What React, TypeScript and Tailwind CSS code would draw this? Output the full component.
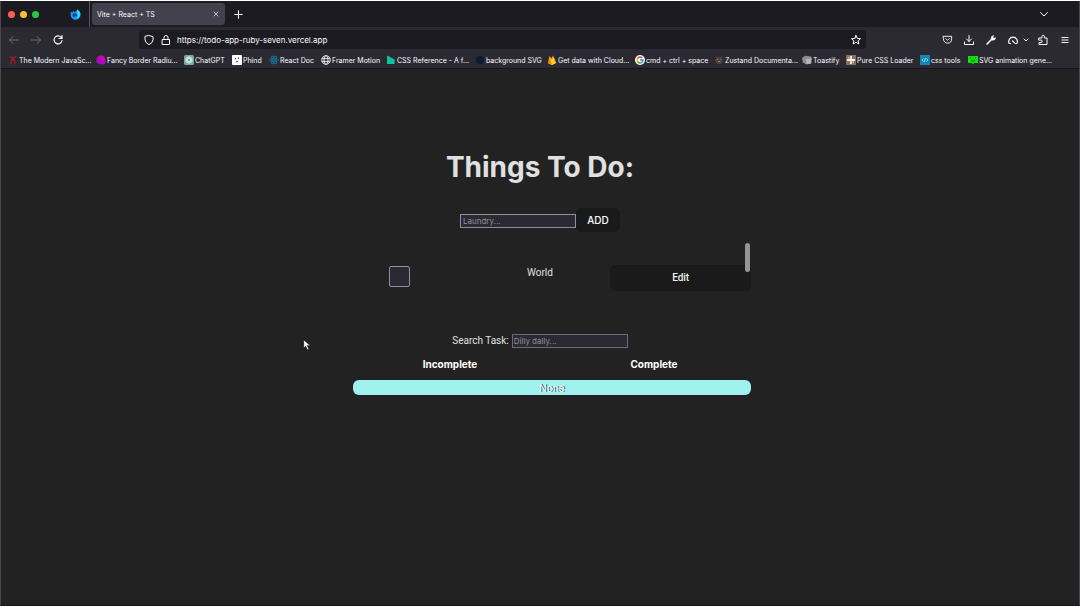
import React from "react";

type Bookmark = { label: string; width: string; icon: React.ReactNode };

const bookmarks: Bookmark[] = [
  { label: "The Modern JavaSc...", width: "w-[88px]", icon: <path d="M2 .8l1.200 1.700h3.600L8 .8M5 2v3M3 4.500l2-1 2 1M3 9.500l.5-3.500L5 5l1.500 1L7 9.500" fill="none" stroke="#a01c2c" strokeWidth="1.200" /> },
  { label: "Fancy Border Radiu...", width: "w-[88px]", icon: (<><defs><linearGradient id="blob" x1="0" y1="1" x2="1" y2="0"><stop offset="0" stopColor="#7a10d8" /><stop offset="1" stopColor="#f0029a" /></linearGradient></defs><path d="M4 .5C7 0 9.500 2 9.500 5.500S8 10 5.500 9.500 0 8.500.2 5.800 2 .8 4 .5z" fill="url(#blob)" /></>) },
  { label: "ChatGPT", width: "w-[48px]", icon: (<><rect width="10" height="10" rx="1.500" fill="#74aa9c" /><g fill="none" stroke="#e8f5f1" strokeWidth=".7"><ellipse cx="5" cy="5" rx="1.800" ry="3.500" /><ellipse cx="5" cy="5" rx="1.800" ry="3.500" transform="rotate(60 5 5)" /><ellipse cx="5" cy="5" rx="1.800" ry="3.500" transform="rotate(120 5 5)" /></g></>) },
  { label: "Phind", width: "w-[37px]", icon: (<><rect width="10" height="10" rx=".8" fill="#fff" /><path d="M3 3h1v1.200H3zM6 2.500h1v1.200H6zM4 6h2v.8H4z" fill="#222" /></>) },
  { label: "React Doc", width: "w-[52px]", icon: (<g fill="none" stroke="#14789c" strokeWidth=".8"><ellipse cx="5" cy="5" rx="4.500" ry="1.800" /><ellipse cx="5" cy="5" rx="4.500" ry="1.800" transform="rotate(60 5 5)" /><ellipse cx="5" cy="5" rx="4.500" ry="1.800" transform="rotate(120 5 5)" /><circle cx="5" cy="5" r=".6" fill="#14789c" /></g>) },
  { label: "Framer Motion", width: "w-[65px]", icon: (<g fill="none" stroke="#f4f4f6" strokeWidth=".9"><circle cx="5" cy="5" r="4.300" /><ellipse cx="5" cy="5" rx="2" ry="4.300" /><path d="M1 3.600h8M1 6.400h8" /></g>) },
  { label: "CSS Reference - A f...", width: "w-[89px]", icon: <path d="M1 1.200Q1 .5 1.800 .8L8.500 4.500Q9.300 5 8.500 5.600V9H1z" fill="#0fc49c" /> },
  { label: "background SVG", width: "w-[72px]", icon: <circle cx="5" cy="5" r="4" fill="#0b1c2e" /> },
  { label: "Get data with Cloud...", width: "w-[88px]", icon: (<><path d="M1 8L2.500 1l2 2.500L6 .5 9 8 5 10z" fill="#ffa611" /><path d="M1 8l6-5.500L9 8 5 10z" fill="#ffcb2b" /><path d="M1 8l2-3 2 4.800z" fill="#f57c00" /></>) },
  { label: "cmd + ctrl + space", width: "w-[79px]", icon: (<><circle cx="5" cy="5" r="5" fill="#fff" /><g fill="none" strokeWidth="1.500"><path d="M7.200 2.900A3 3 0 0 0 2.400 3.600" stroke="#ea4335" /><path d="M2.400 3.600a3 3 0 0 0 0 2.800" stroke="#fbbc05" /><path d="M2.400 6.400A3 3 0 0 0 7 7.200" stroke="#34a853" /><path d="M7 7.200A3 3 0 0 0 8 5H5" stroke="#4285f4" /></g></>) },
  { label: "Zustand Documenta...", width: "w-[88px]", icon: (<><path d="M2 3l-.5-2 2 1h3l2-1L8 4l1 2-2 3H3L1 6z" fill="#4b403c" /><path d="M3 4.500h1M6.500 4.500h1M4 6.500h2" stroke="#c8854e" strokeWidth=".8" /></>) },
  { label: "Toastify", width: "w-[44px]", icon: (<><path d="M0 3L3 .8l6 .7 1 2-.5 5-5 1L.8 7.500z" fill="#8d8d90" /><path d="M4 4l5-.5v5l-4.500.5z" fill="#b5b5b8" /></>) },
  { label: "Pure CSS Loader", width: "w-[74px]", icon: (<><rect width="10" height="10" fill="#8c6f5c" /><path d="M5 1v8M1 5h8" stroke="#f4eee4" strokeWidth="1.800" /><path d="M2 2h1.500v1.500H2zM6.500 6.500H8V8H6.500z" fill="#d4bda5" /></>) },
  { label: "css tools", width: "w-[48px]", icon: (<><rect width="10" height="10" fill="#1287b5" /><path d="M3.500 3.500L2 5l1.500 1.500M6.500 3.500L8 5 6.500 6.500M5.500 3l-1 4" stroke="#d7f1fb" strokeWidth=".7" fill="none" /></>) },
  { label: "SVG animation gene...", width: "w-[84px]", icon: (<><path d="M0 1h10v7H6l-1 1.500L4 8H0z" fill="#0ee014" /><path d="M2 3h1M7 3h1M3 5.500q2 1.500 4 0" stroke="#075c0a" strokeWidth=".8" fill="none" /></>) },
];

const iconButton = "flex shrink-0 items-center justify-center";

function Glyph({ size = "size-3", children }: { size?: string; children: React.ReactNode }) {
  return (
    <svg viewBox="0 0 12 12" className={`${size} shrink-0`} fill="none" stroke="currentColor" strokeWidth="1" strokeLinecap="round" strokeLinejoin="round" aria-hidden="true">
      {children}
    </svg>
  );
}

function TabBar() {
  return (
    <div className="flex h-[26px] items-center bg-[#1c1b22]">
      <div className="flex gap-[5px] pl-[7px]">
        <button aria-label="Close window" className="size-[7px] rounded-full bg-[#ff5f57]" />
        <button aria-label="Minimize window" className="size-[7px] rounded-full bg-[#febc2e]" />
        <button aria-label="Zoom window" className="size-[7px] rounded-full bg-[#28c840]" />
      </div>
      <button aria-label="Firefox View" className="ml-[31px]">
        <svg viewBox="0 0 12 12" className="block size-[11px]" aria-hidden="true">
          <path d="M1 3l1.500.8L3.500 2l1 1.500Q6 2.500 7 3L8 .5q3.500 2 3.500 5.500A5.400 5.400 0 0 1 .7 6.500Q.5 4.500 1 3z" fill="#139cf0" />
          <path d="M8 .5q4 3 3 6.500Q10 10 7 10.500 10 7 7 3z" fill="#3ad6fb" />
          <path d="M3 5l3-.5q2 .8 1.500 2.500T4.500 8.500 3 5z" fill="#1b3da7" />
        </svg>
      </button>
      <div className="ml-2 h-full w-px bg-[#55545d]" />
      <div className="ml-[2px] flex h-[22px] w-[133px] items-center justify-between rounded-[3px] bg-[#42414d] px-[5px]">
        <span className="text-[7px] text-[#fbfbfe]">Vite + React + TS</span>
        <button aria-label="Close tab" className={iconButton}>
          <Glyph size="size-[8px]"><path d="M3 3l6 6M9 3l-6 6" /></Glyph>
        </button>
      </div>
      <button aria-label="New tab" className={`${iconButton} ml-2`}>
        <Glyph size="size-[11px]"><path d="M6 2v8M2 6h8" strokeWidth="1.200" /></Glyph>
      </button>
      <button aria-label="List all tabs" className={`${iconButton} mr-[29px] ml-auto`}>
        <Glyph><path d="M2.500 4.500L6 8l3.500-3.500" /></Glyph>
      </button>
    </div>
  );
}

function NavBar() {
  return (
    <div className="flex h-[25px] items-center bg-[#2b2a33] pr-2 pl-[7px]">
      <div className="flex w-[131px] shrink-0 items-center gap-[10px]">
        <button aria-label="Back" className={`${iconButton} text-[#6c6b73]`}>
          <Glyph><path d="M10.500 6h-9M5 2.500L1.500 6 5 9.500" /></Glyph>
        </button>
        <button aria-label="Forward" className={`${iconButton} text-[#6c6b73]`}>
          <Glyph><path d="M1.500 6h9M7 2.500L10.500 6 7 9.500" /></Glyph>
        </button>
        <button aria-label="Reload" className={iconButton}>
          <Glyph><path d="M9.800 4.500A4 4 0 1 0 10 6.500M10 1.500v3H7" strokeWidth="1.200" /></Glyph>
        </button>
      </div>
      <div className="flex h-[19px] w-[727px] items-center rounded-[3px] bg-[#1c1b22] px-1">
        <Glyph><path d="M6 1.500l4 1.200v3q0 3-4 5-4-2-4-5v-3z" /></Glyph>
        <span className="ml-[5px] flex">
          <Glyph><path d="M2.500 5.500h7v5h-7zM4 5.500v-2a2 2 0 0 1 4 0v2" /></Glyph>
        </span>
        <input aria-label="Address" defaultValue="https://todo-app-ruby-seven.vercel.app" className="ml-[5px] min-w-0 flex-1 bg-transparent text-[8px] text-[#fbfbfe] outline-none" />
        <button aria-label="Bookmark this page" className={iconButton}>
          <Glyph><path d="M6 1.500l1.300 2.900 3.200.3-2.400 2.100.8 3.200L6 8.300 3.100 10l.8-3.200L1.500 4.700l3.200-.3z" /></Glyph>
        </button>
      </div>
      <div className="ml-auto flex items-center text-[#fbfbfe]">
        <button aria-label="Pocket" className={`${iconButton} mr-[10px]`}>
          <Glyph size="size-[11px]"><path d="M1.500 2.500h9v3a4.500 4.500 0 0 1-9 0zM4 5l2 2 2-2" /></Glyph>
        </button>
        <button aria-label="Downloads" className={`${iconButton} mr-[10px]`}>
          <Glyph><path d="M6 1.500v6M3.500 5L6 7.500 8.500 5M1.500 8v2.500h9V8" /></Glyph>
        </button>
        <button aria-label="Developer tools" className={`${iconButton} mr-[10px]`}>
          <Glyph><path d="M2 10l4.500-4.500" strokeWidth="1.600" /><path d="M6 4.500Q6 2 8.500 1.500L8 3.500 9 4.300l1.700-.5Q10.500 6.500 7.500 6.300z" fill="currentColor" strokeWidth=".5" /></Glyph>
        </button>
        <button aria-label="Extension" className={`${iconButton} mr-[4px]`}>
          <Glyph><path d="M3.500 9.500H2.300A4.300 4.300 0 1 1 9.800 9.500H8.500" strokeWidth="1.200" /><path d="M5.500 7l2 1.800" strokeWidth="1.200" /></Glyph>
        </button>
        <button aria-label="More" className={`${iconButton} mr-[8px]`}>
          <Glyph size="size-[6px]"><path d="M2 4l4 4 4-4" strokeWidth="2" /></Glyph>
        </button>
        <button aria-label="Extensions" className={`${iconButton} mr-[10px]`}>
          <Glyph><path d="M2 4h3V2.500a1.200 1.200 0 0 1 2.400 0V4H10v6.500H2V8.500h2a1.200 1.200 0 0 0 0-2.400H2z" /></Glyph>
        </button>
        <button aria-label="Menu" className={iconButton}>
          <Glyph><path d="M2.500 3.500h7M2.500 6h7M2.500 8.500h7" strokeLinecap="butt" /></Glyph>
        </button>
      </div>
    </div>
  );
}

function BookmarksBar() {
  return (
    <nav aria-label="Bookmarks" className="flex h-[17px] items-center overflow-hidden border-b border-[#17161b] bg-[#2b2a33] pl-[7px]">
      {bookmarks.map((b) => (
        <a key={b.label} href="#" className={`${b.width} flex shrink-0 items-center gap-px text-[7px] whitespace-nowrap text-[#fbfbfe]`}>
          <svg viewBox="0 0 10 10" className="size-[10px] shrink-0" aria-hidden="true">{b.icon}</svg>
          {b.label}
        </a>
      ))}
    </nav>
  );
}

export default function App() {
  return (
    <div className="flex min-h-screen flex-col bg-white pt-px pb-[2px] font-['Inter',sans-serif] leading-none text-[#fbfbfe]">
      <div className="flex flex-1 flex-col overflow-hidden border-x border-b border-[#48484b] border-b-[#171518] bg-[#222222]">
        <TabBar />
        <NavBar />
        <BookmarksBar />
        <main className="mx-auto flex w-full max-w-[422px] flex-col items-center pt-[78px] text-[10px] text-[#e0e0e0]">
          <h1 className="text-[28px] leading-[40px] font-bold whitespace-nowrap">Things To Do:</h1>
          <form className="mt-[21px] flex items-center" onSubmit={(e) => e.preventDefault()}>
            <input aria-label="New task" placeholder="Laundry..." className="mt-[2px] h-[14px] w-[116px] border border-[#8f8f9d] bg-[#2b2a33] px-[2px] text-[8px] placeholder:text-[#8f8f96]" />
            <button className="h-6 w-[44px] rounded-[5px] bg-[#1a1a1a] font-medium text-white">ADD</button>
          </form>
          <div className="relative mt-[11px] h-[56px] w-full font-['Roboto',sans-serif]">
            <div className="grid grid-cols-3 pt-[22px]">
              <input type="checkbox" aria-label="Complete World" className="mt-px size-[21px] appearance-none justify-self-center rounded-[2px] border border-[#8f8f9d] bg-[#2b2a33]" />
              <span className="pt-[3px] text-center">World</span>
              <button className="h-[26px] rounded-[5px] bg-[#1a1a1a] font-medium text-[#efefef]">Edit</button>
            </div>
            <div className="absolute top-0 right-px h-[29px] w-[5px] rounded-full bg-[#949494]" />
          </div>
          <div className="mt-[35px] flex items-center gap-[3px]">
            <label htmlFor="search" className="font-['Roboto',sans-serif]">Search Task:</label>
            <input id="search" placeholder="Dilly dally..." className="h-[14px] w-[116px] border border-[#6b6a76] bg-[#2b2a33] px-px text-[8px] placeholder:text-[#8f8f96]" />
          </div>
          <div className="mt-[11px] w-full pl-6">
            <div className="grid grid-cols-2 gap-[10px] text-center font-bold text-white">
              <h2>Incomplete</h2>
              <h2>Complete</h2>
            </div>
            <div className="mt-[11px] flex h-[15px] items-center justify-center rounded-[6px] bg-[#a0f2ee]">
              <span className="text-white [text-shadow:1px_0_0_#213547]">None</span>
            </div>
          </div>
        </main>
      </div>
      <svg viewBox="0 0 12 18" className="pointer-events-none fixed top-[339px] left-[303px] h-[12px] w-[8px]" aria-hidden="true">
        <path d="M1 1v13l3-3 2.500 5.500 2.500-1L6.500 10H11z" fill="#fff" stroke="#111" strokeWidth="1" />
      </svg>
    </div>
  );
}
